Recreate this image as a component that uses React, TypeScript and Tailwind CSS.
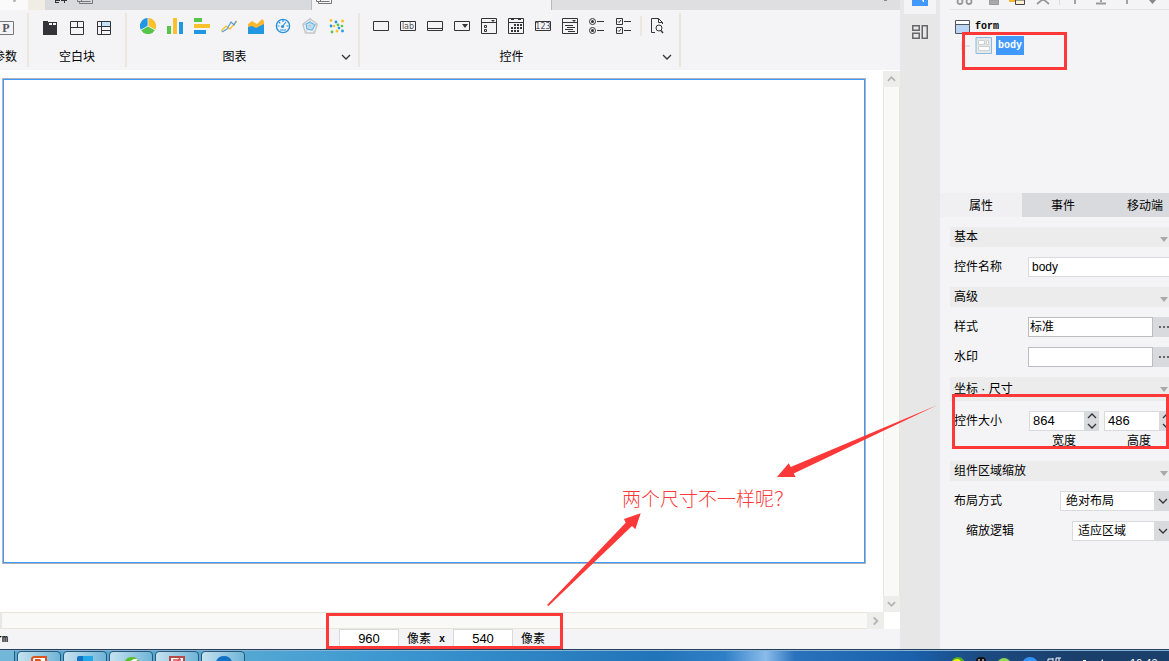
import type { ReactNode } from "react";
import clsx from "clsx";

const INK = "#333338";

function Icon({ children, size = 16 }: { children: ReactNode; size?: number }) {
  return (
    <svg width={size} height={size} viewBox={`0 0 ${size} ${size}`} fill="none" className="block shrink-0" aria-hidden="true">
      {children}
    </svg>
  );
}

function Chevron({ dir = "down", color = "#333338", w = 10 }: { dir?: "up" | "down" | "right"; color?: string; w?: number }) {
  const d = { up: "M1 6 5 2 9 6", down: "M1 2 5 6 9 2", right: "M3 0 7 4 3 8" }[dir];
  return (
    <svg width={w} height={8} viewBox="0 0 10 8" fill="none" stroke={color} strokeWidth={w > 9 ? 1.3 : 2} className="block shrink-0" aria-hidden="true">
      <path d={d} />
    </svg>
  );
}

const blankIcons = [
  {
    name: "空白画布",
    svg: (
      <Icon>
        <path d="M1 1h5v1h9v13H1z" fill={INK} />
        <path d="M7 3h3v2H7zM11 3h3v2h-3z" fill="#f4f4f7" />
      </Icon>
    ),
  },
  {
    name: "分块",
    svg: (
      <Icon>
        <path d="M1.5 1.500h13v13h-13zM1.500 7.500h13M8.500 1.500v6" stroke={INK} />
      </Icon>
    ),
  },
  {
    name: "表格块",
    svg: (
      <Icon>
        <path d="M6 2h8v4H6z" fill="#bfe3fb" />
        <path d="M1.500 1.500h13v13h-13zM1.500 6.500h13M5.500 1.500v13M5.500 10.500h9" stroke={INK} />
      </Icon>
    ),
  },
];

const chartIcons = [
  {
    name: "饼图",
    svg: (
      <Icon>
        <path d="M8 8V0A8 8 0 0 0 1 12z" fill="#2196e3" />
        <path d="M8 8V0a8 8 0 0 1 7 12z" fill="#fbc02d" />
        <path d="M8 8 1 12a8 8 0 0 0 14 0z" fill="#56c64b" />
        <path d="M8 0v8L1 12M8 8l7 4" stroke="#f4f4f7" strokeWidth=".8" />
      </Icon>
    ),
  },
  {
    name: "柱形图",
    svg: (
      <Icon>
        <path d="M0 8h4v8H0z" fill="#56c64b" />
        <path d="M6 0h4v16H6z" fill="#fbc02d" />
        <path d="M12 4h4v12h-4z" fill="#2196e3" />
      </Icon>
    ),
  },
  {
    name: "条形图",
    svg: (
      <Icon>
        <path d="M0 0h8v4H0z" fill="#56c64b" />
        <path d="M0 6h16v4H0z" fill="#fbc02d" />
        <path d="M0 12h12v4H0z" fill="#2196e3" />
      </Icon>
    ),
  },
  {
    name: "折线图",
    svg: (
      <Icon>
        <path d="M0 13 5 8l4 3 7-8" stroke="#fbc02d" strokeWidth="1.3" />
        <path d="M1 14 6 11 10 4l3 3 2-4" stroke="#5b9fd0" strokeWidth="1.2" />
      </Icon>
    ),
  },
  {
    name: "面积图",
    svg: (
      <Icon>
        <path d="M0 6 4 3l5 3 5-5 2 2v7H0z" fill="#fbb72d" />
        <path d="M0 9l4-1 4 2 8-4v10H0z" fill="#2196e3" />
      </Icon>
    ),
  },
  {
    name: "仪表盘",
    svg: (
      <Icon>
        <circle cx="8" cy="8" r="6.6" stroke="#2b94dd" strokeWidth="1.4" />
        <path d="M7 9l4-5M5 12h6M8 2v2M2.5 8h2M11.5 8h2M4 4l1.300 1.300" stroke="#2b94dd" strokeWidth="1.2" />
        <circle cx="7.500" cy="8.500" r="1.600" fill="#2b94dd" />
      </Icon>
    ),
  },
  {
    name: "雷达图",
    svg: (
      <Icon>
        <path d="M8 .8 15.200 6.200 12.500 15H3.500L.8 6.200z" stroke="#c3c7cc" strokeWidth="1.4" />
        <path d="M8 4l5 3-3 5-5-1-1-5z" fill="#c8e7fb" stroke="#58b4ec" strokeWidth="1.2" />
        <path d="M8 1v7l7-2M8 8l4 6M8 8l-4 6M8 8 1 6" stroke="#b5c3cf" strokeWidth=".7" />
      </Icon>
    ),
  },
  {
    name: "散点图",
    svg: (
      <Icon>
        <g fill="#fbc02d">
          <circle cx="2" cy="2.500" r="1.400" />
          <circle cx="13.500" cy="3" r="1.500" />
          <circle cx="5" cy="8" r="1.300" />
          <circle cx="8" cy="13" r="1.500" />
        </g>
        <g fill="#2196e3">
          <circle cx="7" cy="4" r="1.400" />
          <circle cx="2" cy="8" r="1.400" />
          <circle cx="10" cy="10" r="1.300" />
          <circle cx="13.500" cy="13" r="1.400" />
        </g>
        <g fill="#56c64b">
          <circle cx="9" cy="7" r="1.400" />
          <circle cx="13" cy="8" r="1.300" />
          <circle cx="3" cy="14" r="1.400" />
        </g>
      </Icon>
    ),
  },
];

const controlIcons = [
  { name: "文本框", svg: <Icon><path d="M.5 3.500h15v9H.5z" stroke={INK} /></Icon> },
  {
    name: "标签",
    svg: (
      <Icon>
        <path d="M.5 3.500h15v9H.5z" stroke={INK} />
        <text x="8" y="11" textAnchor="middle" fontSize="8" fontFamily="DejaVu Sans" fill="#55555a">lab</text>
      </Icon>
    ),
  },
  { name: "按钮", svg: <Icon><path d="M.5 3.500h15v9H.5zM.5 10.500h15" stroke={INK} /></Icon> },
  {
    name: "下拉框",
    svg: (
      <Icon>
        <path d="M.5 3.500h15v9H.5z" stroke={INK} />
        <path d="M8 6h6l-3 4z" fill={INK} />
      </Icon>
    ),
  },
  {
    name: "下拉复选框",
    svg: (
      <Icon>
        <path d="M.5.5h15v15H.5zM.5 4.500h15M3.500 7.500h2v2h-2zM3.500 11.500h2v2h-2z" stroke={INK} />
        <path d="M10 2h4l-2 2z" fill={INK} />
      </Icon>
    ),
  },
  {
    name: "日期",
    svg: (
      <Icon>
        <path d="M.5.5h15v15H.5zM.5 4.500h15" stroke={INK} />
        <path d="M3 1.500h3M10 1.500h3" stroke={INK} />
        <path d="M6 7h8M3 10h11M3 13h8" stroke={INK} strokeWidth="2" strokeDasharray="2 1" />
      </Icon>
    ),
  },
  {
    name: "数字",
    svg: (
      <Icon>
        <path d="M.5 3.500h15v9H.5z" stroke={INK} />
        <text x="8" y="11" textAnchor="middle" fontSize="8" fontFamily="DejaVu Sans" fill="#55555a">123</text>
      </Icon>
    ),
  },
  {
    name: "文本域",
    svg: (
      <Icon>
        <path d="M.5.5h15v15H.5zM.5 4.500h15M3 7.500h8M5 9.500h8M3 11.500h8M6 13.500h7" stroke={INK} />
        <path d="M10 2h4l-2 2z" fill={INK} />
      </Icon>
    ),
  },
  {
    name: "单选按钮组",
    svg: (
      <Icon>
        <circle cx="3.500" cy="3.500" r="3" stroke={INK} />
        <circle cx="3.500" cy="12.500" r="3" stroke={INK} />
        <circle cx="3.500" cy="3.500" r="1.500" fill={INK} />
        <circle cx="3.500" cy="12.500" r="1.500" fill={INK} />
        <path d="M8 3.500h7M8 12.500h7" stroke={INK} />
      </Icon>
    ),
  },
  {
    name: "复选框组",
    svg: (
      <Icon>
        <path d="M.5.5h6v6h-6zM.5 9.500h6v6h-6zM8 3.500h7M8 12.500h7M2 3.500l1 1L5 2M2 12.500l1 1L5 11" stroke={INK} />
      </Icon>
    ),
  },
];

function Separator() {
  return <div className="my-[3px] w-[2px] shrink-0 bg-[#e9e7de]" />;
}

function Group({ title, icons, children, expandable, className }: { title: string; icons: { name: string; svg: ReactNode }[]; children?: ReactNode; expandable?: boolean; className?: string }) {
  return (
    <section className={clsx("flex shrink-0 flex-col justify-between px-[13px] pb-1", className)}>
      <div className="flex h-4 items-center gap-[11px]">
        {icons.map((icon) => (
          <button key={icon.name} type="button" aria-label={icon.name}>{icon.svg}</button>
        ))}
        {children}
      </div>
      <div className="flex items-center leading-[18px]">
        <span className="flex-1 text-center">{title}</span>
        {expandable && (
          <button type="button" aria-label={`展开${title}`} className="-mr-[6px] flex w-[22px] justify-end">
            <Chevron />
          </button>
        )}
      </div>
    </section>
  );
}

function PagesIcon() {
  return (
    <svg width="17" height="4" viewBox="0 0 17 4" fill="none" stroke="#77777c" className="block" aria-hidden="true">
      <path d="M.5 0v1.500h11M2.500 3.500h13V0M2.500 1.500v2M4.500 0v1.500h9" />
    </svg>
  );
}

function FileTabs() {
  return (
    <div className="flex h-[10px] shrink-0 bg-[#dfdfe1]">
      <div className="flex w-7 bg-[#fafafa]">
        <span className="mx-auto h-[2px] w-[3px] rounded-b bg-[#b5b5b9]" />
      </div>
      <div className="w-[17px] bg-[#f0ede4]" />
      <div className="flex w-[267px] gap-[10px] border-r border-[#b9b9bd] bg-[#d9dadd] pl-2">
        <svg width="13" height="3" viewBox="0 0 13 3" fill="none" stroke="#333338" className="ml-px block" aria-hidden="true">
          <path d="M1 .5h5M1.500 0v3M5 2.500H1M10.500 0v3M7 .5h6" />
        </svg>
        <PagesIcon />
      </div>
      <div className="w-[240px] border-r border-[#b9b9bd] bg-[#f4f4f7] pl-1">
        <PagesIcon />
      </div>
      <span className="mr-[13px] ml-auto h-px w-[3px] bg-[#88888c]" />
    </div>
  );
}

function Ribbon() {
  return (
    <div className="flex h-[60px] shrink-0 bg-[#f4f4f7]">
      <section className="flex w-[27px] shrink-0 flex-col items-end justify-between overflow-hidden pt-[11px] pb-1">
        <button type="button" aria-label="参数" className="mr-[13px]">
          <svg width="16" height="14" viewBox="0 0 16 14" fill="none" className="block" aria-hidden="true">
            <path d="M.5.5h15v13H.5z" stroke="#77777c" />
            <text x="8" y="11" textAnchor="middle" fontSize="12" fontWeight="bold" fontFamily="Liberation Serif" fill="#55555a">P</text>
          </svg>
        </button>
        <span className="mr-[10px] leading-[18px] whitespace-nowrap">参数</span>
      </section>
      <Separator />
      <Group title="空白块" icons={blankIcons} className="w-24 pt-[10px]" />
      <Separator />
      <Group title="图表" icons={chartIcons} expandable className="w-[231px] pt-2" />
      <Separator />
      <Group title="控件" icons={controlIcons} expandable className="w-[319px] pt-2">
        <span className="-mx-[3px] h-5 w-[2px] bg-[#e9e7de]" />
        <button type="button" aria-label="预览">
          <Icon>
            <path d="M12.500 6V4.500l-4-4h-7v14H5M8.500.5v4h4" stroke={INK} />
            <circle cx="9" cy="10" r="3" stroke={INK} />
            <path d="M11 12.500 13 15" stroke={INK} strokeWidth="1.400" />
          </Icon>
        </button>
      </Group>
      <Separator />
    </div>
  );
}

function Workspace() {
  return (
    <div className="flex min-h-0 flex-1 flex-col bg-white">
      <div className="flex min-h-0 flex-1">
        <div className="flex flex-1 pt-2 pr-[17px] pb-12 pl-[2px]">
          <div className="flex-1 border border-[#aeb2b8]">
            <div className="h-full border border-[#3d9aff] bg-white" />
          </div>
        </div>
        <div className="flex w-[17px] flex-col pt-px">
          <button type="button" aria-label="向上滚动" className="flex h-4 items-center justify-center bg-[#ededeb]">
            <Chevron dir="up" color="#b4b4b4" w={9} />
          </button>
          <div className="flex-1 border-x border-[#e9e6d9] bg-[#f9f9f7]" />
          <button type="button" aria-label="向下滚动" className="flex h-4 items-center justify-center bg-[#ededeb]">
            <Chevron color="#b4b4b4" w={9} />
          </button>
        </div>
      </div>
      <div className="flex h-[17px] shrink-0 pr-4">
        <div className="flex-1 border-y border-l-2 border-[#e9e6d9] border-l-[#e7e7e7] bg-[#f9f9f7]" />
        <button type="button" aria-label="向右滚动" className="flex w-[17px] items-center justify-center bg-[#ededeb]">
          <Chevron dir="right" color="#b4b4b4" w={9} />
        </button>
      </div>
    </div>
  );
}

function StatusBar() {
  return (
    <div className="flex h-5 shrink-0 items-start overflow-hidden bg-[#f4f4f7] leading-5">
      <div className="flex w-[339px] overflow-hidden">
        <span className="-ml-4 font-['Liberation_Mono','Noto_Sans_CJK_SC',monospace] text-[10px] leading-[22px] font-bold">form</span>
      </div>
      <label className="flex gap-2">
        <input aria-label="宽" defaultValue="960" className="h-5 w-[60px] border border-[#d9dadd] bg-white text-center font-['Liberation_Sans',sans-serif] text-[13px]" />
        像素
      </label>
      <span className="mx-2 w-[6px] font-['Liberation_Mono',monospace] text-[10px] leading-[22px] font-bold">x</span>
      <label className="flex gap-2">
        <input aria-label="高" defaultValue="540" className="h-5 w-[60px] border border-[#d9dadd] bg-white text-center font-['Liberation_Sans',sans-serif] text-[13px]" />
        像素
      </label>
    </div>
  );
}

function SideStrip() {
  return (
    <nav className="flex w-10 shrink-0 flex-col items-center gap-[11px] bg-[#e7e7e7]">
      <button type="button" aria-label="组件" className="flex h-[14px] w-8 items-start justify-center bg-[#f4f4f7]">
        <svg width="16" height="6" viewBox="0 0 16 6" aria-hidden="true">
          <path d="M0 0h16v6H0z" fill="#419afb" />
          <path d="M10 0h2v2h-1z" fill="#fff" />
        </svg>
      </button>
      <button type="button" aria-label="布局">
        <svg width="16" height="14" viewBox="0 0 16 14" fill="none" stroke="#66666b" strokeWidth="1.500" className="block" aria-hidden="true">
          <path d="M.75.75h6.500v4.500H.75zM.75 8.250h6.500v5H.75zM10.250.75h5v12.500h-5z" />
        </svg>
      </button>
    </nav>
  );
}

function TreePanel() {
  return (
    <div className="h-[193px] shrink-0">
      <div className="ml-[10px] h-[10px] border-b border-[#e3e3e6]">
        <svg width="219" height="6" viewBox="0 0 219 6" fill="none" className="block" aria-hidden="true">
          <g stroke="#99999d" strokeWidth="1.800">
            <circle cx="10" cy="1.500" r="2.500" />
            <circle cx="19" cy="1.500" r="2.500" />
            <path d="M87 4l6-5 6 5M125 0v4M151 0v2M146 3.500h10M177 0v4" />
          </g>
          <path d="M39.500 0v4.500h9V0z" fill="#aaaaad" stroke="#99999d" />
          <path d="M59 0h7v2h-7z" fill="#fbb72d" />
          <path d="M65.500 0v4.500h9V0z" fill="#fff3d6" stroke="#44444a" />
          <path d="M109.500 0v5" stroke="#d9dadd" />
          <path d="M199 0h7l-3.500 4z" fill="#88888c" />
        </svg>
      </div>
      <ul className="pt-[7px] pl-[15px] font-['Liberation_Mono','Noto_Sans_CJK_SC',monospace] text-[10px] leading-[19px] font-bold">
        <li>
          <div className="flex items-center gap-[5px]">
            <svg width="15" height="14" viewBox="0 0 15 14" aria-hidden="true">
              <path d="M.5.5h14v13H.5z" fill="#bcd4f3" stroke="#55555c" />
              <path d="M1 1h13v3H1z" fill="#fff" />
              <path d="M1 4.500h13" stroke="#55555c" />
            </svg>
            form
          </div>
          <ul>
            <li className="flex items-center pl-[6px]">
              <svg width="10" height="8" viewBox="0 0 10 8" className="mr-1" aria-hidden="true">
                <path d="M0 0v8M3 4h6" stroke="#d9d9dc" strokeWidth="1.500" />
              </svg>
              <svg width="17" height="17" viewBox="0 0 17 17" fill="none" aria-hidden="true">
                <path d="M1 .5h15.500v16H1z" fill="#e4e8ea" stroke="#8cbcdc" />
                <path d="M3.500 3.500h6v4h-6zM11.500 3.500h2v4h-2zM3.500 9.500h11v4h-11z" fill="#fff" stroke="#cfcfcf" />
              </svg>
              <span className="ml-1 bg-[#419afb] px-[2px] text-white">body</span>
            </li>
          </ul>
        </li>
      </ul>
    </div>
  );
}

function SectionHeader({ title, tall }: { title: string; tall?: boolean }) {
  return (
    <h3 className={clsx("flex items-center justify-between bg-[#ececec] pr-px pl-1", tall ? "h-6 leading-6" : "h-5 leading-[18px]")}>
      {title}
      <svg width="8" height="5" viewBox="0 0 8 5" className={clsx(!tall && "mt-1")} aria-hidden="true">
        <path d="M0 0h8L4 5z" fill="#a9a9ac" />
      </svg>
    </h3>
  );
}

function Spinner({ id, label, value }: { id: string; label: string; value: string }) {
  return (
    <div className="flex w-[70px] shrink-0 flex-col">
      <div className="flex h-5">
        <input id={id} defaultValue={value} className="w-14 border border-[#d9dadd] bg-white pl-[3px] font-['Liberation_Sans',sans-serif] text-[13px]" />
        <div className="flex w-[14px] flex-col items-center justify-between bg-[#d9dadd] py-px">
          <button type="button" aria-label="增加"><Chevron dir="up" /></button>
          <button type="button" aria-label="减少"><Chevron /></button>
        </div>
      </div>
      <label htmlFor={id} className="text-center leading-5">{label}</label>
    </div>
  );
}

function PickerRow({ id, label, value }: { id: string; label: string; value: string }) {
  return (
    <div className="flex h-5 items-center pl-1">
      <label htmlFor={id} className="w-[74px] shrink-0">{label}</label>
      <input id={id} defaultValue={value} className="h-5 min-w-0 flex-1 border border-[#bdbdc1] bg-white px-px pb-[3px]" />
      <button type="button" aria-label={`选择${label}`} className="flex h-5 w-4 items-center justify-end gap-[2px] bg-[#d9dadd]">
        <i className="size-[2px] bg-[#66666b]" />
        <i className="size-[2px] bg-[#66666b]" />
        <i className="size-[2px] bg-[#66666b]" />
      </button>
    </div>
  );
}

function SelectRow({ id, label, value, indent }: { id: string; label: string; value: string; indent?: boolean }) {
  return (
    <div className={clsx("flex h-5 items-center justify-between", indent ? "pl-4" : "pl-1")}>
      <label htmlFor={id}>{label}</label>
      <div className={clsx("relative -mr-1", indent ? "w-[101px]" : "w-[113px]")}>
        <select id={id} className="block h-5 w-full appearance-none border border-[#d9dadd] bg-white pl-[5px]">
          <option>{value}</option>
        </select>
        <span className="pointer-events-none absolute inset-y-0 right-0 flex w-[19px] items-center bg-[#d9dadd] pl-1">
          <Chevron />
        </span>
      </div>
    </div>
  );
}

function PropertyPanel() {
  return (
    <div className="flex flex-col">
      <div role="tablist" className="flex h-6 overflow-hidden bg-[#d9dadd]">
        {["属性", "事件", "移动端"].map((tab, i) => (
          <button key={tab} type="button" role="tab" aria-selected={i === 0} className={clsx("w-[82px] shrink-0 pt-px", i === 0 && "bg-[#f0f0f3]")}>
            {tab}
          </button>
        ))}
      </div>
      <div className="flex flex-col gap-[10px] pt-[10px] pl-[10px]">
        <SectionHeader title="基本" />
        <div className="flex h-5 items-center pl-1">
          <label htmlFor="name" className="w-[74px] shrink-0">控件名称</label>
          <input id="name" defaultValue="body" className="h-5 min-w-0 flex-1 border border-r-0 border-[#d9dadd] bg-white px-[3px] font-['Liberation_Sans',sans-serif]" />
        </div>
        <SectionHeader title="高级" />
        <PickerRow id="style" label="样式" value="标准" />
        <PickerRow id="mark" label="水印" value="" />
        <SectionHeader title="坐标 · 尺寸" tall />
        <div className="flex gap-[5px] pl-1 leading-5">
          <span className="w-[70px] shrink-0">控件大小</span>
          <Spinner id="w" label="宽度" value="864" />
          <Spinner id="h" label="高度" value="486" />
        </div>
        <SectionHeader title="组件区域缩放" />
        <SelectRow id="layout" label="布局方式" value="绝对布局" />
        <SelectRow id="scale" label="缩放逻辑" value="适应区域" indent />
      </div>
    </div>
  );
}

const apps = [
  {
    name: "PowerPoint",
    svg: (
      <>
        <path d="M14 10V3q0-2 3-2h11v9z" fill="#fff" stroke="#d9541e" strokeWidth="2" />
        <path d="M17 3h5q3 3 0 6h-5z" fill="#d9541e" />
      </>
    ),
  },
  {
    name: "设计器",
    svg: (
      <>
        <path d="M13 10V2q0-2 2-2h5v10z" fill="#1273c4" />
        <path d="M19 0h10v5H19z" fill="#22a7e8" />
      </>
    ),
  },
  {
    name: "浏览器",
    svg: (
      <>
        <path d="M14 10q0-9 8-9t8 9z" fill="#5cbf2e" />
        <path d="M18 8q4-6 10-5-3 5-10 5z" fill="#fff" />
      </>
    ),
  },
  {
    name: "报表",
    svg: (
      <>
        <path d="M14 10V1h14v9z" fill="#fff" stroke="#b84848" strokeWidth="2" />
        <path d="M17 4h8M24 2l-5 6" stroke="#d95050" strokeWidth="1.500" />
      </>
    ),
  },
  {
    name: "Edge",
    svg: (
      <>
        <path d="M13 10Q14 0 22 0t9 10z" fill="#1272c4" />
        <path d="M17 8q5-4 10 0z" fill="#2f9be0" />
      </>
    ),
  },
];

function Taskbar() {
  return (
    <footer className="shrink-0 border-t border-[#24405c]">
      <div className="flex h-[11px] items-start overflow-hidden border-t border-[#86b3d6] bg-[linear-gradient(90deg,#55a9d3_20%,#3b96d0_34%,#2274b8_56%,#2f7fc6_62%,#8abcec_65.500%,#2a72bb_68%,#1a60ab_78%,#1c4a80_84%,#1a3f6b_92%)]">
        <div className="mr-[2px] h-4 w-[15px] shrink-0 border-r border-[#2b5876] bg-[#72b7d8]" />
        {apps.map((app) => (
          <button
            key={app.name}
            type="button"
            aria-label={app.name}
            className="mr-[2px] h-4 w-11 shrink-0 overflow-hidden rounded-t-sm border border-[#2b5876] bg-linear-to-r from-[#c5e2f0] to-[#6fb5d8] pt-1"
          >
            <svg width="42" height="10" viewBox="0 0 42 10" className="block" aria-hidden="true">
              {app.svg}
            </svg>
          </button>
        ))}
        <div className="ml-auto flex items-start">
          <svg width="180" height="10" viewBox="0 0 180 10" className="block" aria-hidden="true">
            <circle cx="8" cy="13" r="7" fill="#4fae20" />
            <circle cx="7" cy="13" r="5" fill="#f7f01c" />
            <path d="M26 10q0-4 5-4t5 4z" fill="#101010" />
            <path d="M28 9h2M32 9h2" stroke="#fff" />
            <circle cx="54" cy="14" r="7" fill="#8fd858" />
            <circle cx="80" cy="14" r="8" fill="#3592f5" />
            <path d="M98 10V8h5M103 10V7M106 10V7h5M109 10V7" stroke="#fff" fill="none" />
            <path d="M133 9h3v1h-3zM151 10l2-2v2z" fill="#fff" />
          </svg>
          <time className="mt-[6px] mr-[11px] w-[28px] font-['Liberation_Sans',sans-serif] text-[11px] leading-3 text-white">16:40</time>
        </div>
      </div>
    </footer>
  );
}

// hand-drawn notes lying over the window
function Annotations() {
  return (
    <div className="pointer-events-none absolute inset-0 overflow-hidden">
      <div className="absolute top-8 left-[962px] h-[38px] w-[105px] border-3 border-[#fd3838]" />
      <div className="absolute top-[394px] right-0 h-[55px] w-[217px] border-3 border-[#fd3838]" />
      <div className="absolute top-[613px] left-[326px] h-9 w-[237px] border-3 border-[#fd3838]" />
      <svg width="1169" height="661" viewBox="0 0 1169 661" fill="#fd3838" className="absolute top-0 left-0" aria-hidden="true">
        <path d="M777 477 788.700 463.300 790.700 467 937.500 405 793.700 473.500 795.700 477z" />
        <path d="M640.700 513.300 624 519 625.700 522.700 547 605 548.500 606 632 526 635.300 529.300z" />
      </svg>
      <p className="absolute top-[487px] left-[622px] text-[19px] leading-[26px] font-light whitespace-nowrap text-[#fd3838]">两个尺寸不一样呢？</p>
    </div>
  );
}

export default function App() {
  return (
    <div className="relative flex h-screen flex-col overflow-hidden bg-[#f4f4f7] font-['Liberation_Sans','Noto_Sans_CJK_SC',sans-serif] text-xs text-black">
      <div className="flex min-h-0 flex-1">
        <main className="flex min-w-0 flex-1 flex-col overflow-hidden">
          <FileTabs />
          <Ribbon />
          <Workspace />
          <StatusBar />
        </main>
        <SideStrip />
        <aside className="w-[229px] shrink-0 overflow-hidden">
          <TreePanel />
          <PropertyPanel />
        </aside>
      </div>
      <Taskbar />
      <Annotations />
    </div>
  );
}
